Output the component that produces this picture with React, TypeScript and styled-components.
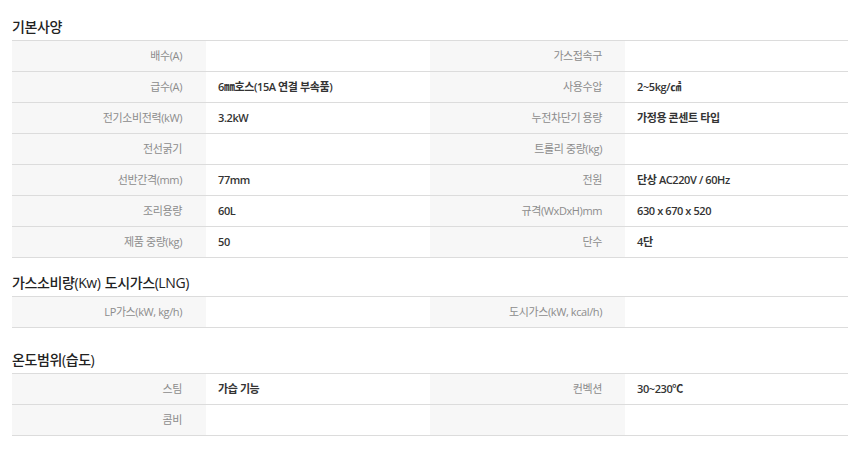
import React from "react";
import styled, { createGlobalStyle } from "styled-components";

const Global = createGlobalStyle`
  html, body { margin: 0; padding: 0; background: #fff; }
  body { font-family: "Open Sans", "Noto Sans CJK KR", sans-serif; color: #333; }
`;

const Page = styled.div`
  padding: 0 12px;
  width: 836px;
`;

const Section = styled.section<{ $top: number }>`
  margin-top: ${(p) => p.$top}px;
`;

const Title = styled.h2`
  margin: 0;
  height: 26px;
  line-height: 26px;
  font-size: 14px;
  font-weight: 500;
  letter-spacing: -0.4px;
  word-spacing: 1px;
  color: #222;
`;

const Table = styled.div`
  border-top: 1px solid #dcdcdc;
`;

const Row = styled.div`
  display: grid;
  grid-template-columns: 194px 224px 195px 1fr;
  height: 30px;
  border-bottom: 1px solid #dcdcdc;
`;

const Label = styled.div<{ $pr: number }>`
  background: #f7f7f7;
  text-align: right;
  padding-right: ${(p) => p.$pr}px;
  line-height: 30px;
  font-size: 11px;
  letter-spacing: -0.4px;
  color: #8c8c8c;
  white-space: nowrap;
`;

const Value = styled.div`
  padding-left: 12px;
  line-height: 30px;
  font-size: 11px;
  font-weight: 600;
  letter-spacing: -0.4px;
  color: #333;
  white-space: nowrap;
`;

type Cell = [string, string];
type RowData = [Cell, Cell?];

const basic: RowData[] = [
  [["배수(A)", ""], ["가스접속구", ""]],
  [["급수(A)", "6㎜호스(15A 연결 부속품)"], ["사용수압", "2~5kg/㎠"]],
  [["전기소비전력(kW)", "3.2kW"], ["누전차단기 용량", "가정용 콘센트 타입"]],
  [["전선굵기", ""], ["트롤리 중량(kg)", ""]],
  [["선반간격(mm)", "77mm"], ["전원", "단상 AC220V / 60Hz"]],
  [["조리용량", "60L"], ["규격(WxDxH)mm", "630 x 670 x 520"]],
  [["제품 중량(kg)", "50"], ["단수", "4단"]],
];

const gas: RowData[] = [
  [["LP가스(kW, kg/h)", ""], ["도시가스(kW, kcal/h)", ""]],
];

const temp: RowData[] = [
  [["스팀", "가습 기능"], ["컨벡션", "30~230℃"]],
  [["콤비", ""], ["", ""]],
];

const SpecTable: React.FC<{ rows: RowData[] }> = ({ rows }) => (
  <Table>
    {rows.map((r, i) => (
      <Row key={i}>
        <Label $pr={24}>{r[0][0]}</Label>
        <Value>{r[0][1]}</Value>
        <Label $pr={23}>{r[1] ? r[1][0] : ""}</Label>
        <Value>{r[1] ? r[1][1] : ""}</Value>
      </Row>
    ))}
  </Table>
);

export default function App() {
  return (
    <Page>
      <Global />
      <Section $top={14}>
        <Title>기본사양</Title>
        <SpecTable rows={basic} />
      </Section>
      <Section $top={12}>
        <Title>가스소비량(Kw) 도시가스(LNG)</Title>
        <SpecTable rows={gas} />
      </Section>
      <Section $top={19}>
        <Title>온도범위(습도)</Title>
        <SpecTable rows={temp} />
      </Section>
    </Page>
  );
}
